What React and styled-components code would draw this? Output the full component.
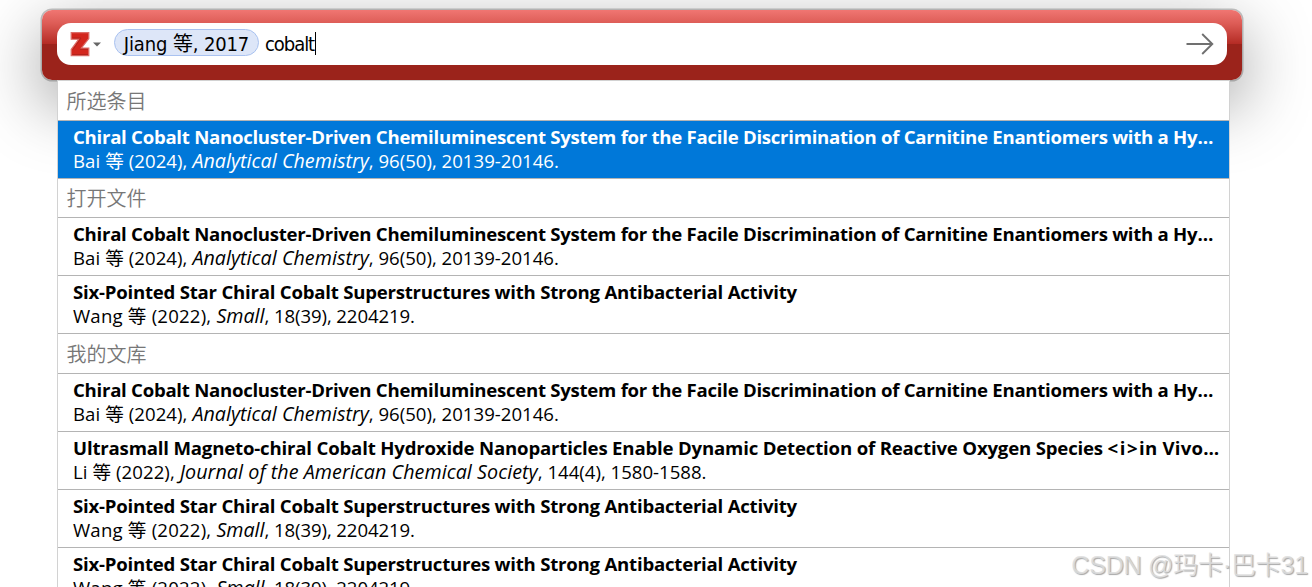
import React from "react";
import styled, { createGlobalStyle } from "styled-components";

const GlobalStyle = createGlobalStyle`
  * { box-sizing: border-box; }
  html, body { margin: 0; background: #fff; }
  #root { display: block; }
`;

const uiFont = `"Open Sans", "Noto Sans CJK SC", sans-serif`;

const Page = styled.main`
  position: relative;
  display: flex;
  flex-direction: column;
  align-items: flex-start;
  width: 1312px;
  height: 587px;
  padding-top: 10px;
  overflow: hidden;
  font-family: ${uiFont};
  color: #000;
`;

const Bar = styled.header`
  display: flex;
  flex: none;
  width: 1200px;
  height: 70px;
  margin-left: 42px;
  padding: 13px 15px 15px;
  border-radius: 10px;
  background: linear-gradient(#f07672 0, #dc5b55 14px, #b42b24 34px, #9b231b 34px, #9b231b 100%);
  box-shadow: 0 0 0 1.5px rgba(0, 0, 0, 0.22), 0 22px 68px 0 rgba(0, 0, 0, 0.42);
`;

const SearchField = styled.div`
  display: flex;
  align-items: center;
  flex: 1;
  height: 42px;
  padding: 0 13px 0 13px;
  border-radius: 14px;
  background: #fff;
`;

const MenuButton = styled.div`
  display: flex;
  align-items: center;
  gap: 3px;
  width: 44px;
  height: 26px;
`;

const Query = styled.div`
  display: flex;
  flex: 1;
  align-items: center;
  height: 28px;
  margin-top: -3px;
  font-family: "DejaVu Sans Condensed", "Noto Sans CJK SC", sans-serif;
  font-size: 20px;
  line-height: 26px;
  white-space: pre;
`;

const Citation = styled.span`
  display: flex;
  align-items: center;
  justify-content: center;
  width: 145px;
  height: 27px;
  padding-top: 2px;
  border: 1px solid #a9c2f0;
  border-radius: 14px;
  background: #dde6f8;
  letter-spacing: -0.13px;
`;

const Typed = styled.span`
  margin-left: 6px;
  padding-top: 2px;
  letter-spacing: -1.05px;
`;

const Caret = styled.span`
  width: 1px;
  height: 23px;
  margin-top: 2px;
  margin-left: 1px;
  background: #000;
`;

const Results = styled.section`
  flex: none;
  width: 1173px;
  margin-left: 57px;
  border: 1px solid #d2d2d2;
  background: #fff;
`;

const GroupTitle = styled.h2`
  height: ${(p) => p.$height}px;
  margin: 0;
  padding-left: 8.5px;
  border-bottom: 1px solid #b4b4b4;
  font-family: "Noto Sans CJK SC", sans-serif;
  font-size: 20px;
  font-weight: 350;
  line-height: ${(p) => (p.$height - 40) * 2 + 39}px;
  color: #777;
`;

const Item = styled.article`
  height: 58px;
  padding: 4px 0 0 15px;
  border-bottom: 1px solid #b4b4b4;
  background: ${(p) => (p.$selected ? "#0078d9" : "#fff")};
  color: ${(p) => (p.$selected ? "#fff" : "#000")};
  white-space: pre;
`;

const Title = styled.div`
  height: 24px;
  font-size: 18.6px;
  font-weight: 700;
  line-height: 24px;
`;

const Details = styled.div`
  height: 24px;
  font-size: 18.6px;
  line-height: 24px;
`;

const Run = styled.span`
  letter-spacing: ${(p) => p.$tracking || 0}px;
`;

const Journal = styled.em`
  font-size: 19.7px;
  line-height: 1;
  letter-spacing: ${(p) => p.$tracking}px;
`;

const Watermark = styled.div`
  position: absolute;
  right: 4px;
  bottom: 6px;
  font-family: "Liberation Sans", "Noto Sans CJK SC", sans-serif;
  font-size: 25px;
  font-weight: 350;
  line-height: 32px;
  letter-spacing: -0.2px;
  white-space: pre;
  color: rgba(222, 222, 222, 0.85);
  text-shadow: 1px 1px 1px rgba(120, 120, 120, 0.65);
`;

const cobaltNanocluster = {
  title: [
    ["Chiral Cobalt Nanocluster-Driven Chemiluminescent System for the Facile Discrimination of Carnitine Enantiomers with a Hy…", -0.265],
  ],
  authors: ["Bai 等 (2024), ", 0.07],
  journal: ["Analytical Chemistry", 0.03],
  pages: [", 96(50), 20139-20146.", 0],
};
const sixPointedStar = {
  title: [["Six-Pointed Star Chiral Cobalt Superstructures with Strong Antibacterial Activity", -0.222]],
  authors: ["Wang 等 (2022), ", 0.2],
  journal: ["Small", 0],
  pages: [", 18(39), 2204219.", -0.1],
};
const ultrasmall = {
  title: [
    ["Ultrasmall Magneto-chiral Cobalt Hydroxide Nanoparticles Enable Dynamic Detection of Reactive Oxygen Species ", -0.175],
    ["<i>", 1.5],
    ["in Vivo…", 0.25],
  ],
  authors: ["Li 等 (2022), ", 0.07],
  journal: ["Journal of the American Chemical Society", 0.06],
  pages: [", 144(4), 1580-1588.", 0],
};

const groups = [
  { name: "所选条目", height: 40, items: [cobaltNanocluster] },
  { name: "打开文件", height: 39, items: [cobaltNanocluster, sixPointedStar] },
  { name: "我的文库", height: 40, items: [cobaltNanocluster, ultrasmall, sixPointedStar, sixPointedStar] },
];

function ZoteroIcon() {
  return (
    <svg width="20" height="26" viewBox="0 0 20 26">
      <path d="M1.2 1.7H18.8V7.5L11.3 17.2H18.8V24.7H1.2V18.5L8.8 8.2H1.2Z" fill="#d3261d" stroke="#dc6d68" strokeWidth="1.2" />
      <path d="M2.4 7H11L3 18.5M18 18.2H10M2.4 23.6H18" fill="none" stroke="#b2231c" strokeWidth="1" />
    </svg>
  );
}

function MenuArrow() {
  return (
    <svg width="8" height="5" viewBox="0 0 8 5">
      <path d="M0 0.5H8L4 4.5Z" fill="#666" />
    </svg>
  );
}

function SubmitArrow() {
  return (
    <svg width="28" height="22" viewBox="0 0 28 22">
      <path d="M0.5 11H26.3M16.2 1L26.3 11L16.2 21" fill="none" stroke="#707070" strokeWidth="1.9" />
    </svg>
  );
}

function Result({ item, selected }) {
  return (
    <Item $selected={selected}>
      <Title>
        {item.title.map(([text, tracking]) => (
          <Run key={text} $tracking={tracking}>{text}</Run>
        ))}
      </Title>
      <Details>
        <Run $tracking={item.authors[1]}>{item.authors[0]}</Run>
        <Journal $tracking={item.journal[1]}>{item.journal[0]}</Journal>
        <Run $tracking={item.pages[1]}>{item.pages[0]}</Run>
      </Details>
    </Item>
  );
}

export default function App() {
  return (
    <Page>
      <GlobalStyle />
      <Bar>
        <SearchField>
          <MenuButton>
            <ZoteroIcon />
            <MenuArrow />
          </MenuButton>
          <Query>
            <Citation>Jiang 等, 2017</Citation>
            <Typed>cobalt</Typed>
            <Caret />
          </Query>
          <SubmitArrow />
        </SearchField>
      </Bar>
      <Results>
        {groups.map((group, g) => (
          <React.Fragment key={group.name}>
            <GroupTitle $height={group.height}>{group.name}</GroupTitle>
            {group.items.map((item, i) => (
              <Result key={i} item={item} selected={g === 0 && i === 0} />
            ))}
          </React.Fragment>
        ))}
      </Results>
      <Watermark>CSDN @玛卡·巴卡31</Watermark>
    </Page>
  );
}
